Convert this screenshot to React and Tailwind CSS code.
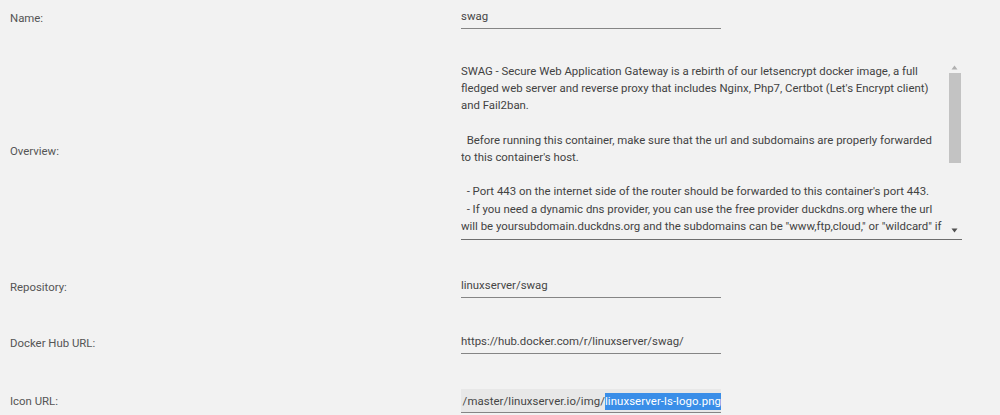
import React from "react";

const overviewLines = [
  "SWAG - Secure Web Application Gateway is a rebirth of our letsencrypt docker image, a full",
  "fledged web server and reverse proxy that includes Nginx, Php7, Certbot (Let's Encrypt client)",
  "and Fail2ban.",
  "",
  "  Before running this container, make sure that the url and subdomains are properly forwarded",
  "to this container's host.",
  "",
  "  - Port 443 on the internet side of the router should be forwarded to this container's port 443.",
  "  - If you need a dynamic dns provider, you can use the free provider duckdns.org where the url",
  'will be yoursubdomain.duckdns.org and the subdomains can be "www,ftp,cloud," or "wildcard" if',
];

function Label({ children }) {
  return (
    <div className="w-[461px] shrink-0 pl-[10px] text-[#555555] leading-[17px]">{children}</div>
  );
}

function Field({ children, className = "" }) {
  return (
    <div
      className={
        "w-[260px] h-[21px] pb-[3px] border-b border-[#858585] flex items-start overflow-hidden whitespace-nowrap leading-[17px] text-[#454545] " +
        className
      }
    >
      {children}
    </div>
  );
}

function Scrollbar() {
  return (
    <div className="w-[15px] shrink-0 flex flex-col items-center pt-[3px] pb-[6px]">
      <svg width="7" height="5" viewBox="0 0 7 5" className="shrink-0">
        <path d="M3.5 0.5 L6.5 4.5 L0.5 4.5 Z" fill="#b0b0b0" />
      </svg>
      <div className="mt-[3px] w-[12px] h-[90px] bg-[#c3c3c3]" />
      <div className="flex-1" />
      <svg width="7" height="5" viewBox="0 0 7 5" className="shrink-0">
        <path d="M0.5 0.5 L6.5 0.5 L3.5 4.5 Z" fill="#505050" />
      </svg>
    </div>
  );
}

export default function App() {
  return (
    <div
      className="w-[1000px] h-[415px] overflow-hidden bg-[#f2f2f2] text-[11.4px] pt-[8px] flex flex-col"
      style={{ fontFamily: "Roboto, 'Liberation Sans', sans-serif" }}
    >
      <div className="flex items-center">
        <Label>Name:</Label>
        <Field>swag</Field>
      </div>

      <div className="flex items-center mt-[33px]">
        <Label>Overview:</Label>
        <div className="w-[501px] h-[178px] border-b border-[#6e6e6e] flex">
          <div className="flex-1 overflow-hidden pt-[1px] leading-[17.2px] text-[#424242]">
            {overviewLines.map((l, i) => (
              <div key={i} className="whitespace-pre h-[17.2px]">
                {l}
              </div>
            ))}
          </div>
          <Scrollbar />
        </div>
      </div>

      <div className="flex items-center mt-[37px]">
        <Label>Repository:</Label>
        <Field>linuxserver/swag</Field>
      </div>

      <div className="flex items-center mt-[35px]">
        <Label>Docker Hub URL:</Label>
        <Field>https://hub.docker.com/r/linuxserver/swag/</Field>
      </div>

      <div className="flex items-center mt-[35px]">
        <Label>Icon URL:</Label>
        <Field className="bg-[#e8e8e8] h-[24px] pt-[4px] justify-end tracking-[0.08px]">
          <span>/master/linuxserver.io/img/</span>
          <span className="bg-[#3a8ee8] text-white">linuxserver-ls-logo.png</span>
        </Field>
      </div>
    </div>
  );
}
